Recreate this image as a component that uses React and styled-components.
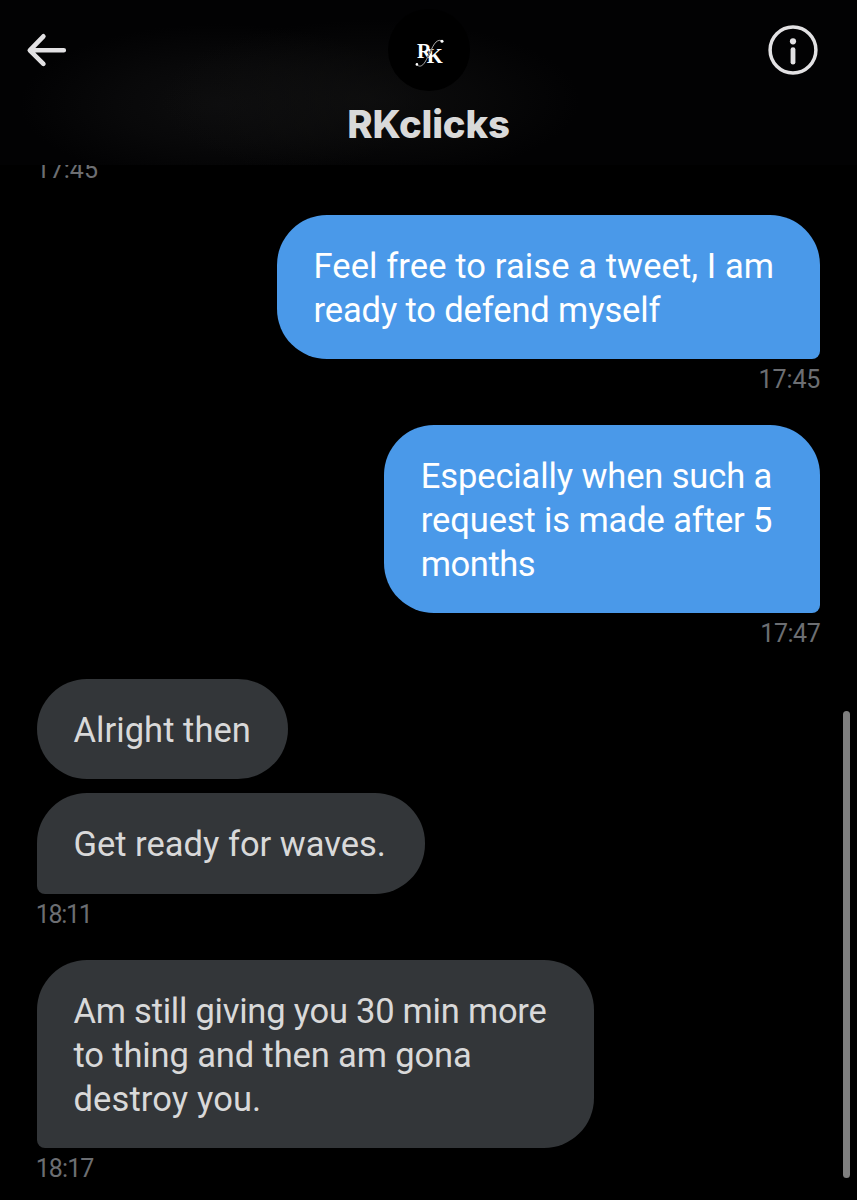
import React from 'react';
import styled, {createGlobalStyle} from 'styled-components';

const BLUE = '#4a99e9';
const GREY = '#333639';
const LIGHT = '#d9d9d9';
const MUTED = '#6c6e72';

const GlobalStyle = createGlobalStyle `
    * {
        box-sizing: border-box;
    }

    body {
        margin: 0;
        background: #000;
    }
`

const Screen = styled.div `
    display: flex;
    flex-direction: column;
    position: relative;
    width: 857px;
    height: 1200px;
    overflow: hidden;
    background: #000;
    font-family: Roboto, 'Liberation Sans', sans-serif;
`

const HeaderContainer = styled.header `
    display: grid;
    grid-template-columns: 1fr 82px 1fr;
    grid-template-rows: 82px 1fr;
    align-items: center;
    flex: none;
    height: 165px;
    padding: 9px 37px 0 25px;
    background:
        radial-gradient(ellipse 210px 80px at 370px 100px, rgba(17, 17, 17, 0.7), rgba(17, 17, 17, 0.4) 50%, transparent),
        radial-gradient(ellipse 200px 80px at 220px 104px, rgba(16, 16, 17, 0.75), rgba(16, 16, 17, 0.45) 50%, transparent),
        #020203;

    svg {
        display: block;
    }
`

const IconButton = styled.button `
    justify-self: ${p => p.$end ? 'end' : 'start'};
    padding: 0;
    border: 0;
    background: none;
    color: #e2e1e3;
`

const Avatar = styled.div `
    width: 82px;
    height: 82px;
    margin-left: 6px;
    border-radius: 50%;
    background: #000;
`

const Name = styled.h1 `
    grid-column: 1 / -1;
    margin: 0 -12px 0 0;
    padding-bottom: 9px;
    text-align: center;
    font-family: Inter, Roboto, sans-serif;
    font-size: 38.3px;
    font-weight: 800;
    line-height: 46px;
    letter-spacing: -0.2px;
    color: ${LIGHT};
`

const Thread = styled.main `
    display: flex;
    flex-direction: column;
    flex: 1;
    min-height: 0;
    overflow: hidden;
    padding: 0 36.7px;
`

const Group = styled.section `
    display: flex;
    flex-direction: column;
    flex: none;
    align-items: ${p => p.$mine ? 'flex-end' : 'flex-start'};
`

// the newest bubble of a group keeps one sharp corner on the sender's side
const Bubble = styled.div `
    width: ${p => p.$width}px;
    min-height: 100.3px;
    padding: 28.7px 0 26.8px 36.8px;
    border-radius: 50px;
    ${p => p.$tail && (p.$mine ? 'border-bottom-right-radius: 8px;' : 'border-bottom-left-radius: 8px;')}
    background: ${p => p.$mine ? BLUE : GREY};
    color: ${p => p.$mine ? '#fff' : LIGHT};

    & + & {
        margin-top: 13.9px;
    }
`

const Line = styled.div `
    font-size: 34.5px;
    line-height: 44px;
    white-space: pre;
    letter-spacing: ${p => p.$track}px;
`

const Time = styled.time `
    height: 66.5px;
    margin: ${p => p.$first ? '-16.3px' : '0'} 0 0 -1px;
    padding-top: 6.3px;
    font-size: 25px;
    line-height: 30px;
    letter-spacing: ${p => p.$track || 0}px;
    color: ${MUTED};
`

const groups = [
    {
        mine: true,
        time: '17:45',
        track: -0.1,
        bubbles: [
            {width: 543.6, lines: [['Feel free to raise a tweet, I am', 0.1], ['ready to defend myself', -0.13]]},
        ],
    },
    {
        mine: true,
        time: '17:47',
        track: -0.45,
        bubbles: [
            {width: 436.3, lines: [['Especially when such a', -0.12], ['request is made after 5', -0.12], ['months', -0.45]]},
        ],
    },
    {
        time: '18:11',
        track: -1.3,
        bubbles: [
            {width: 251.3, lines: [['Alright then', 0.05]]},
            {width: 388.3, lines: [['Get ready for waves.', 0]]},
        ],
    },
    {
        time: '18:17',
        track: -0.9,
        bubbles: [
            {width: 557.5, lines: [['Am still giving you 30 min more', -0.24], ['to thing and then am gona', -0.13], ['destroy you.', 0.12]]},
        ],
    },
];

const ScrollThumb = styled.div `
    position: absolute;
    top: 711px;
    right: 6.7px;
    width: 7px;
    height: 467px;
    border-radius: 4px;
    background: #7f7f7f;
`

const BackIcon = () => (
    <svg width='44' height='40' viewBox='0 0 44 40' fill='none' stroke='currentColor' strokeWidth='4.6' strokeLinecap='round' strokeLinejoin='round'>
        <path d='M18.4 6.3 4.8 20.3l13.6 13.6M5.5 20.3h33.3' />
    </svg>
);

const InfoIcon = () => (
    <svg width='54' height='54' viewBox='0 0 54 54' fill='none' stroke='currentColor'>
        <circle cx='27' cy='27' r='22.9' strokeWidth='3.5' />
        <circle cx='27' cy='18.3' r='3.1' fill='currentColor' stroke='none' />
        <path d='M27 26.6v12.6' strokeWidth='4.8' strokeLinecap='round' />
    </svg>
);

const Monogram = () => (
    <svg width='82' height='82' viewBox='0 0 82 82' fill='#fff' fontFamily="'Liberation Serif', serif" fontWeight='700'>
        <text x='29' y='48.8' fontSize='22' textLength='14.5' lengthAdjust='spacingAndGlyphs'>R</text>
        <text x='38.8' y='54' fontSize='22' textLength='16' lengthAdjust='spacingAndGlyphs'>K</text>
        <path d='M28.8 55.6C34 60.5 37.5 52.5 41 45.5S47.5 29 54.2 31.8' fill='none' stroke='#000' strokeWidth='1.5' />
        <path d='M28.8 55.6C34 60.5 37.5 52.5 41 45.5S47.5 29 54.2 31.8' fill='none' stroke='#bbb' strokeWidth='0.9' />
        <circle cx='28.9' cy='55.4' r='1.3' />
        <circle cx='54' cy='32.3' r='1.5' />
    </svg>
);

const Header = () => (
    <HeaderContainer>
        <IconButton aria-label='Back'><BackIcon /></IconButton>
        <Avatar><Monogram /></Avatar>
        <IconButton $end aria-label='Conversation info'><InfoIcon /></IconButton>
        <Name>RKclicks</Name>
    </HeaderContainer>
);

const App = () => {
    return (
        <Screen>
            <GlobalStyle />
            <Header />
            <Thread>
                <Group>
                    <Time $first>17:45</Time>
                </Group>
                {groups.map(group => (
                    <Group key={group.time} $mine={group.mine}>
                        {group.bubbles.map((bubble, i) => (
                            <Bubble key={i} $mine={group.mine} $width={bubble.width} $tail={i === group.bubbles.length - 1}>
                                {bubble.lines.map(([text, track]) => <Line key={text} $track={track}>{text}</Line>)}
                            </Bubble>
                        ))}
                        <Time $track={group.track}>{group.time}</Time>
                    </Group>
                ))}
            </Thread>
            <ScrollThumb />
        </Screen>
    );
}

export default App;
